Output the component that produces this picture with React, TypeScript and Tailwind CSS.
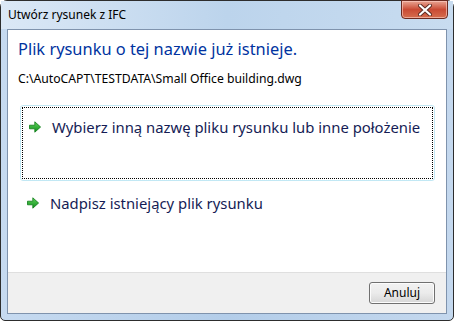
import React from 'react';

const GreenArrow: React.FC = () => (
  <svg width="14" height="14" viewBox="0 0 14 14" className="shrink-0">
    <defs>
      <linearGradient id="ga" x1="0" y1="0" x2="0" y2="1">
        <stop offset="0" stopColor="#5fd35a" />
        <stop offset="1" stopColor="#0f8f1c" />
      </linearGradient>
    </defs>
    <path d="M1.5 5.2 H6.8 V1.8 L12.6 7 L6.8 12.2 V8.8 H1.5 Z" fill="url(#ga)" stroke="#0d7a17" strokeWidth="0.8" strokeLinejoin="round" />
  </svg>
);

const CloseGlyph: React.FC = () => (
  <svg width="14" height="12" viewBox="0 0 14 12">
    <path d="M2 1.5 L12 10.5 M12 1.5 L2 10.5" stroke="#5a2a22" strokeWidth="4" strokeLinecap="round" />
    <path d="M2 1.5 L12 10.5 M12 1.5 L2 10.5" stroke="#ffffff" strokeWidth="2.2" strokeLinecap="round" />
  </svg>
);

const App: React.FC = () => {
  return (
    <div className="w-[454px] h-[321px] bg-white">
      <div
        className="w-[454px] h-[321px] flex flex-col rounded-t-[7px] rounded-b-[5px] border border-[#2d2d2d] bg-gradient-to-r from-[#c6daf0] via-[#b3cde9] to-[#c4d8ee]"
        style={{ fontFamily: '"Noto Sans", "Open Sans", sans-serif' }}
      >
        {/* title bar */}
        <div className="h-[28px] flex items-start justify-between pl-[7px] pr-[5px] bg-gradient-to-r from-[#dbe8f6] via-[#bcd4ec] to-[#c8dcf0]">
          <span className="mt-[6px] text-[12px] leading-[16px] text-black">Utwórz rysunek z IFC</span>
          <div className="w-[47px] h-[19px] -mt-px flex items-center justify-center rounded-b-[4px] border border-[#6b2a20] bg-gradient-to-b from-[#e8a493] via-[#c94a34] to-[#d56d4e] shadow-[inset_0_0_0_1px_rgba(255,210,200,0.6)]">
            <CloseGlyph />
          </div>
        </div>

        {/* client area */}
        <div className="flex-1 mx-[6px] mb-[6px] flex flex-col border border-[#7f93ad] bg-white">
          <div className="flex-1 flex flex-col pl-[10px] pr-[10px]">
            <div className="mt-[9px] text-[16.4px] leading-[20px] text-[#0033a0]">
              Plik rysunku o tej nazwie już istnieje.
            </div>
            <div className="mt-[12px] text-[12.2px] leading-[16px] text-black">
              C:\AutoCAPT\TESTDATA\Small Office building.dwg
            </div>

            <div className="mt-[18px] ml-[2px] mr-[1px] h-[76px] rounded-[3px] border border-[#c2e8f4] p-px">
              <div className="h-full border border-dotted border-black flex items-start gap-[10px] pl-[5px] pt-[12px]">
                <GreenArrow />
                <span className="-mt-[3px] text-[14.85px] leading-[20px] text-[#151c55]">
                  Wybierz inną nazwę pliku rysunku lub inne położenie
                </span>
              </div>
            </div>

            <div className="mt-[15px] ml-[8px] flex items-start gap-[10px]">
              <GreenArrow />
              <span className="-mt-[3px] text-[14.85px] leading-[20px] text-[#151c55]">
                Nadpisz istniejący plik rysunku
              </span>
            </div>
          </div>

          {/* footer */}
          <div className="h-[41px] border-t border-[#dfdfdf] bg-[#f0f0f0] flex items-center justify-end pr-[11px]">
            <button className="w-[66px] h-[22px] rounded-[3px] border border-[#707070] bg-gradient-to-b from-[#f2f2f2] via-[#ebebeb] to-[#d6d6d6] text-[12px] leading-[14px] text-black shadow-[inset_0_0_0_1px_#fcfcfc]">
              Anuluj
            </button>
          </div>
        </div>
      </div>
    </div>
  );
};

export default App;
